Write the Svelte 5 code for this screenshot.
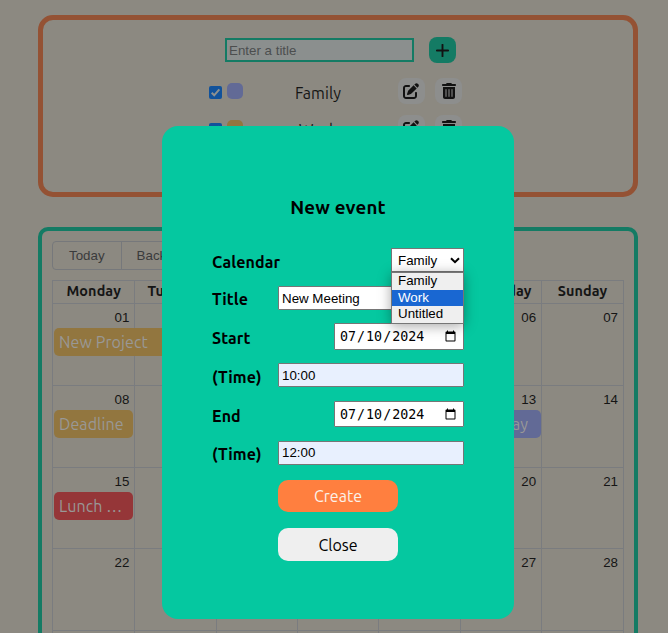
<script>
  const days = ['Monday', 'Tuesday', 'Wednesday', 'Thursday', 'Friday', 'Saturday', 'Sunday'];
  const weeks = [0, 1, 2, 3].map((w) =>
    days.map((_, d) => String(w * 7 + d + 1).padStart(2, '0'))
  );
  const events = [
    { week: 0, from: 1, to: 3, text: 'New Project', kind: 'gold' },
    { week: 1, from: 1, to: 2, text: 'Deadline', kind: 'gold' },
    { week: 1, from: 6, to: 7, text: 'Birthday', kind: 'violet end' },
    { week: 2, from: 1, to: 2, text: 'Lunch …', kind: 'red' }
  ];
  const calendars = [
    { name: 'Family', kind: 'violet' },
    { name: 'Work', kind: 'gold' }
  ];
</script>

<div class="page">
  <section class="calendars">
    <div class="add">
      <input type="text" placeholder="Enter a title" />
      <button class="plus" aria-label="Add">
        <svg width="13" height="13" viewBox="0 0 13 13"><path d="M6.500 0.800V12.200M0.800 6.500H12.200" fill="none" stroke="#121212" stroke-width="1.900" stroke-linecap="round" /></svg>
      </button>
    </div>
    {#each calendars as c}
      <div class="item">
        <span class="check"><svg width="13" height="13" viewBox="0 0 13 13"><path d="M2.7 6.8 5.2 9.3 10.3 3.3" fill="none" stroke="#8e9190" stroke-width="2" /></svg></span>
        <span class="swatch {c.kind}"></span>
        <span class="name">{c.name}</span>
        <button class="tool edit" aria-label="Edit">
          <svg width="16" height="16" viewBox="0 0 512 512"><path d="M471.6 21.7c-21.9-21.9-57.3-21.9-79.2 0L362.3 51.7l97.9 97.9 30.1-30.1c21.9-21.9 21.9-57.3 0-79.2L471.6 21.7zm-299.2 220c-6.1 6.1-10.8 13.6-13.5 21.9l-29.6 88.8c-2.9 8.6-.6 18.1 5.8 24.6s15.9 8.7 24.6 5.8l88.8-29.6c8.2-2.7 15.7-7.4 21.9-13.5L437.7 172.3 339.7 74.3 172.4 241.7zM96 64C43 64 0 107 0 160V416c0 53 43 96 96 96H352c53 0 96-43 96-96V320c0-17.7-14.3-32-32-32s-32 14.3-32 32v96c0 17.7-14.3 32-32 32H96c-17.7 0-32-14.3-32-32V160c0-17.7 14.3-32 32-32h96c17.7 0 32-14.3 32-32s-14.3-32-32-32H96z" /></svg>
        </button>
        <button class="tool" aria-label="Delete">
          <svg width="14" height="16" viewBox="0 0 448 512"><path d="M135.2 17.7C140.6 6.8 151.7 0 163.8 0H284.2c12.1 0 23.2 6.8 28.6 17.7L320 32h96c17.7 0 32 14.3 32 32s-14.3 32-32 32H32C14.3 96 0 81.7 0 64S14.3 32 32 32h96l7.2-14.3zM32 128H416V448c0 35.3-28.7 64-64 64H96c-35.3 0-64-28.7-64-64V128zm96 64c-8.800 0-16 7.200-16 16V432c0 8.800 7.200 16 16 16s16-7.200 16-16V208c0-8.800-7.200-16-16-16zm96 0c-8.800 0-16 7.200-16 16V432c0 8.800 7.200 16 16 16s16-7.200 16-16V208c0-8.800-7.200-16-16-16zm96 0c-8.800 0-16 7.200-16 16V432c0 8.800 7.200 16 16 16s16-7.200 16-16V208c0-8.800-7.200-16-16-16z" /></svg>
        </button>
      </div>
    {/each}
  </section>

  <section class="calendar">
    <div class="toolbar"><span>Today</span><span>Back</span></div>
    <div class="month">
      <div class="head">
        {#each days as d}<span>{d}</span>{/each}
      </div>
      {#each weeks as week, w}
        <div class="week">
          {#each week as n, i}<span class="day" style="grid-column:{i + 1}">{n}</span>{/each}
          {#each events.filter((e) => e.week === w) as e}
            <span class="event {e.kind}" style="grid-column:{e.from} / {e.to}">{e.text}</span>
          {/each}
        </div>
      {/each}
      <div class="week">
        {#each days as _, i}<span class="day" style="grid-column:{i + 1}"></span>{/each}
      </div>
    </div>
  </section>

  <div class="modal">
    <h3>New event</h3>
    <div class="row r1">
      <span class="label">Calendar</span>
      <div class="picker">
        <div class="select"><span>Family</span>
          <svg width="10" height="7" viewBox="0 0 10 7"><path d="M1 1.200 5 5.200 9 1.200" fill="none" stroke="#000" stroke-width="2" /></svg>
        </div>
        <div class="options"><span>Family</span><span class="on">Work</span><span>Untitled</span></div>
      </div>
    </div>
    <div class="row r2"><span class="label">Title</span><input type="text" value="New Meeting" /></div>
    <div class="row r3"><span class="label">Start</span><input type="date" value="2024-07-10" /></div>
    <div class="row r4"><span class="label">(Time)</span><input class="filled" type="text" value="10:00" /></div>
    <div class="row r5"><span class="label">End</span><input class="short" type="date" value="2024-07-10" /></div>
    <div class="row r6"><span class="label">(Time)</span><input class="filled" type="text" value="12:00" /></div>
    <button class="create">Create</button>
    <button class="close">Close</button>
  </div>
</div>

<style>
  :global(body) { background: #8c8981; overflow: hidden; }
  .page, .page * { box-sizing: border-box; }
  .page {
    height: 633px;
    padding: 15px 30px 0 38px;
    overflow: hidden;
    position: relative;
    background: #8c8981;
    color: #151515;
    font: 16px/22px Ubuntu, "Noto Sans", sans-serif;
  }
  button { border: 0; padding: 0; font: inherit; display: flex; align-items: center; justify-content: center; }
  input { font: 13.333px "Liberation Sans", Arial, sans-serif; }
  .calendars {
    height: 182px;
    border: 5px solid #945234;
    border-radius: 15px;
    padding: 17px 0 0 166px;
    overflow: hidden;
  }
  .add { display: flex; gap: 15px; padding-left: 16px; align-items: center; height: 26px; }
  .add input { width: 189px; height: 24px; border: 2px solid #147b64; background: #8b8f8e; padding: 1px 2px; }
  .add input::placeholder { color: #4c4e4e; }
  .plus { width: 27px; height: 26px; border-radius: 8px; background: #147b64; }
  .tool svg { fill: #121212; }
  .item { display: flex; height: 37px; width: 253px; align-items: flex-start; }
  .item:nth-child(2) { margin-top: 15px; }
  .check { width: 13px; height: 13px; background: #11529b; border-radius: 2px; margin: 8px 5px 0 0; }
  .check svg { display: block; }
  .swatch { width: 16px; height: 16px; border-radius: 5px; margin-top: 5px; }
  .name { width: 150px; text-align: center; margin: 4px 5px 0 0; letter-spacing: 0.1px; }
  .tool { width: 27px; height: 26px; border-radius: 8px; background: #8d8e8d; }
  .edit { padding-right: 2px; }
  .tool + .tool { margin-left: 10px; }
  .violet { background: #626a96; }
  .gold { background: #92763f; }
  .red { background: #953638; }

  .calendar {
    margin-top: 30px;
    height: 500px;
    border: 4px solid #147b64;
    border-radius: 10px;
    padding: 10px;
  }
  .toolbar { display: flex; width: max-content; border: 1px solid #76787b; border-radius: 4px; height: 29px; font: 13.333px/27px "Liberation Sans", Arial, sans-serif; color: #3a3b3c; }
  .toolbar span { padding: 0 16px; }
  .toolbar span + span { border-left: 1px solid #76787b; padding: 0 15px; }
  .month { margin-top: 10px; border: 1px solid #7a7c7f; height: 433px; }
  .head, .week { display: grid; grid-template-columns: repeat(6, 81.35px) 1fr; }
  .head { height: 22px; font-weight: 700; font-size: 14.4px; line-height: 21px; text-align: center; letter-spacing: 0.1px; }
  .head span + span, .day:not(:first-child) { border-left: 1px solid #7a7c7f; }
  .week { height: 81.75px; border-top: 1px solid #7a7c7f; }
  .day { grid-row: 1; text-align: right; padding: 5px 5px 0 0; font: 13.333px/18px "Liberation Sans", Arial, sans-serif; }
  .event { grid-row: 1; margin: 24px 1px 0; height: 28px; border-radius: 5px; padding: 2px 5px; line-height: 24px; color: #999896; letter-spacing: 0.1px; white-space: nowrap; overflow: hidden; z-index: 1; }
  .end { text-align: right; padding-right: 13px; margin-right: 0; }

  .modal {
    position: absolute;
    z-index: 5;
    left: 162px;
    top: 126px;
    width: 352px;
    height: 493px;
    border-radius: 16px;
    background: #05c8a0;
    color: #000;
    padding: 70px 50px 0;
  }
  h3 { margin: 0 0 29px; text-align: center; font-size: 18.72px; line-height: 23px; letter-spacing: 0.15px; }
  .row { display: flex; justify-content: space-between; align-items: flex-start; }
  .label { font-weight: 700; line-height: 28px; letter-spacing: 0.12px; }
  .r1, .r4 { height: 38px; }
  .r2 { height: 37px; }
  .r2 .label, .r6 .label { line-height: 26px; }
  .r3, .r5 { height: 40px; }
  .r3 .label, .r5 .label { line-height: 30px; }
  .r6 { height: 39px; }
  .row input { border: 1px solid #767676; background: #fff; color: #000; width: 186px; height: 24px; padding: 1px 3px; border-radius: 1px; }
  .row input[type="date"] { width: 130px; height: 27px; padding: 2px 4px; font: 13.333px monospace; }
  .row input.short { height: 26px; padding: 3px 4px 1px; }
  .row input.filled { background: #e8f0fe; }
  .r6 input.filled { padding-bottom: 3px; }
  .picker { position: relative; width: 73px; font: 13.333px/16px "Liberation Sans", Arial, sans-serif; }
  .select { height: 24px; border: 1px solid #767676; background: #fff; display: flex; align-items: center; justify-content: space-between; padding: 1px 3px 0 6px; }
  .options { position: absolute; z-index: 2; top: 24px; left: 0; width: 73px; border: 1px solid #767676; background: #efefef; box-shadow: 0 2px 12px rgba(0, 0, 0, 0.35); display: flex; flex-direction: column; }
  .options span { padding-left: 6px; height: 16px; }
  .options span:first-child { height: 17px; line-height: 16px; }
  .options span:last-child { height: 17px; }
  .on { background: #1967d2; color: #fff; }
  .create, .close { width: 120px; height: 32px; border-radius: 10px; margin-left: 66px; }
  .create { background: #ff7f3f; color: #fbf2ea; }
  .close { background: #efefef; color: #000; height: 33px; margin-top: 16px; }
</style>
